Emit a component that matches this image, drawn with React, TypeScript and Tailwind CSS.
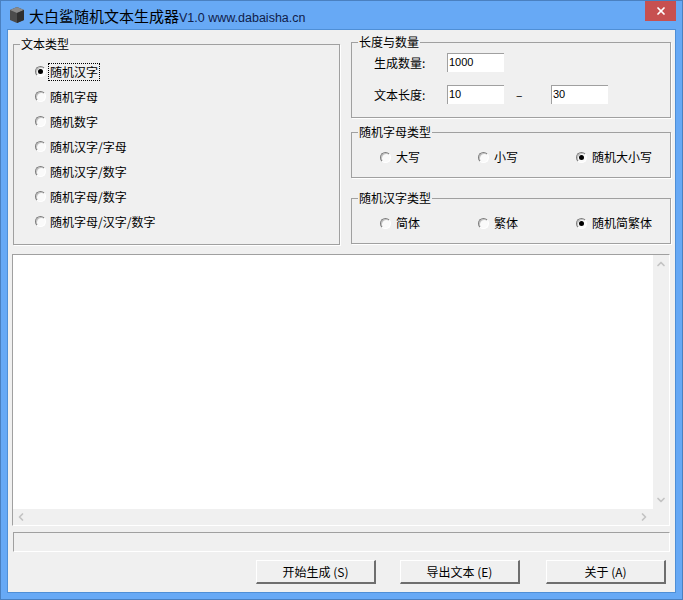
import { ChevronDown, ChevronLeft, ChevronRight, ChevronUp, X } from 'lucide-react'

const cjk = "font-['Noto_Sans_CJK_SC','Noto_Sans',sans-serif]"

function Radio({ checked }: { checked?: boolean }) {
  return (
    <span className="flex h-[11px] w-[11px] shrink-0 items-center justify-center rounded-full border border-[#7c7c7c] border-r-white border-b-white bg-[#fafafa] shadow-[inset_1px_1px_0_#c4c4c4]">
      {checked && <span className="h-[5px] w-[5px] rounded-full bg-black" />}
    </span>
  )
}

function Group({ title, className, children }: { title: string; className: string; children: React.ReactNode }) {
  return (
    <fieldset className={`border border-[#a0a0a0] shadow-[1px_1px_0_#fff] ${className}`}>
      <legend className="ml-[6px] h-[14px] px-[1px] text-[12px] leading-[14px]">{title}</legend>
      {children}
    </fieldset>
  )
}

function Field({ value, className }: { value: string; className: string }) {
  return (
    <div className={`h-[19px] border-t border-l border-[#a0a0a0] bg-white pl-[1px] font-['Liberation_Sans',sans-serif] text-[11px] leading-[17px] ${className}`}>
      {value}
    </div>
  )
}

function OptionRow({ options }: { options: string[] }) {
  return (
    <div className="flex h-[20px] items-center pl-[28px]">
      {options.map((o, i) => (
        <div key={o} className={`flex items-center gap-[5px] ${i < 2 ? 'w-[98px]' : ''}`}>
          <Radio checked={i === 2} />
          <span className="text-[12px]">{o}</span>
        </div>
      ))}
    </div>
  )
}

function Btn({ label, className }: { label: string; className?: string }) {
  return (
    <button className={`h-[24px] w-[120px] border-t border-l border-t-white border-l-white border-r-2 border-b-2 border-r-[#6e6e6e] border-b-[#6e6e6e] bg-[#f0f0f0] text-[12px] leading-none ${className ?? ''}`}>
      {label}
    </button>
  )
}

const types = ['随机汉字', '随机字母', '随机数字', '随机汉字/字母', '随机汉字/数字', '随机字母/数字', '随机字母/汉字/数字']

export default function App() {
  return (
    <div className={`flex h-[600px] w-[683px] flex-col border border-[#4a80c0] bg-[#67a9f5] text-black ${cjk}`}>
      {/* title bar */}
      <div className="flex h-[28px] shrink-0 items-start">
        <svg viewBox="0 0 18 18" className="mt-[5px] ml-[7px] h-[18px] w-[18px]">
          <path d="M9 1 L16 4 L16 14 L9 17 L2 14 L2 4 Z" fill="#4c4c4c" />
          <path d="M9 1 L16 4 L9 7 L2 4 Z" fill="#8a8a8a" />
          <path d="M9 7 L16 4 L16 14 L9 17 Z" fill="#2f2f2f" />
        </svg>
        <div className="mt-[5px] ml-[3px] flex items-baseline whitespace-nowrap">
          <span className="text-[15px] leading-[20px]">大白鲨随机文本生成器</span>
          <span className="font-['Liberation_Sans',sans-serif] text-[12.5px] text-[#10204a]">V1.0 www.dabaisha.cn</span>
        </div>
        <div className="mr-[6px] ml-auto flex h-[20px] w-[31px] items-center justify-center bg-[#c75050]">
          <X size={12} strokeWidth={3.5} className="text-white" />
        </div>
      </div>

      {/* client */}
      <div className="mx-[6px] flex h-[564px] flex-col border border-[#4f8fd6] bg-[#f0f0f0]">
        <div className="flex gap-[11px] pt-[6px] pl-[5px]">
          <Group title="文本类型" className="mt-[1px] h-[208px] w-[327px]">
            <div className="pt-[8px] pl-[21px]">
              {types.map((t, i) => (
                <div key={t} className="flex h-[25px] items-center gap-[3px]">
                  <Radio checked={i === 0} />
                  <span className={`px-[1px] text-[12px] leading-[16px] ${i === 0 ? 'outline-1 outline-dotted outline-black' : ''}`}>{t}</span>
                </div>
              ))}
            </div>
          </Group>
          <div className="flex w-[320px] flex-col">
            <Group title="长度与数量" className="-mt-[1px] h-[83px]">
              <div className="pt-[4px] pl-[22px] text-[12px]">
                <div className="flex items-center">
                  <span className="w-[73px]">生成数量:</span>
                  <Field value="1000" className="w-[57px]" />
                </div>
                <div className="mt-[13px] flex items-center">
                  <span className="w-[73px]">文本长度:</span>
                  <Field value="10" className="w-[57px]" />
                  <span className="w-[47px] pl-[12px]">–</span>
                  <Field value="30" className="w-[57px]" />
                </div>
              </div>
            </Group>
            <Group title="随机字母类型" className="mt-[7px] h-[53px]">
              <div className="pt-[8px]">
                <OptionRow options={['大写', '小写', '随机大小写']} />
              </div>
            </Group>
            <Group title="随机汉字类型" className="mt-[13px] h-[53px]">
              <div className="pt-[8px]">
                <OptionRow options={['简体', '繁体', '随机简繁体']} />
              </div>
            </Group>
          </div>
        </div>

        {/* output box */}
        <div className="mt-[9px] ml-[4px] flex h-[272px] w-[658px] flex-col border border-t-[#a0a0a0] border-l-[#a0a0a0] border-r-white border-b-white">
          <div className="flex min-h-0 flex-1">
            <div className="flex-1 bg-white" />
            <div className="flex w-[16px] flex-col items-center justify-between py-[3px] text-[#c4c4c4]">
              <ChevronUp size={12} strokeWidth={3.5} />
              <ChevronDown size={12} strokeWidth={3.5} />
            </div>
          </div>
          <div className="flex h-[16px] items-center justify-between pr-[19px] pl-[2px] text-[#c4c4c4]">
            <ChevronLeft size={12} strokeWidth={3.5} />
            <ChevronRight size={12} strokeWidth={3.5} />
          </div>
        </div>

        {/* status bar */}
        <div className="mt-[6px] ml-[5px] h-[20px] w-[657px] border border-t-[#a0a0a0] border-l-[#a0a0a0] border-r-white border-b-white" />

        {/* buttons */}
        <div className="mt-[8px] flex pl-[248px]">
          <Btn label="开始生成 (S)" />
          <Btn label="导出文本 (E)" className="ml-[24px]" />
          <Btn label="关于 (A)" className="ml-[26px]" />
        </div>
      </div>
    </div>
  )
}
